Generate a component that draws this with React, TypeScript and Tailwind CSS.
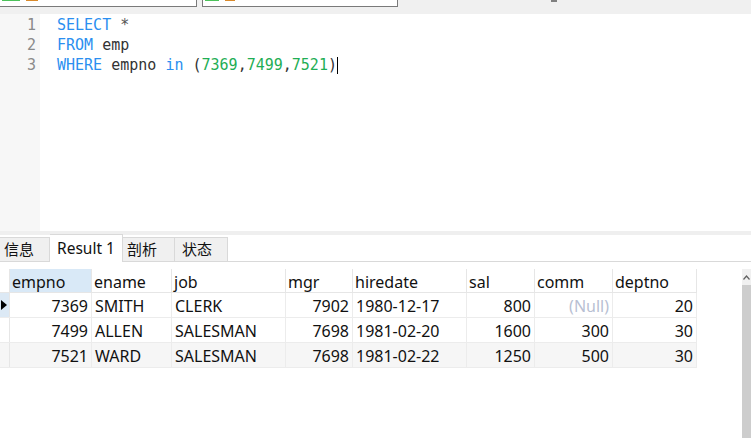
const cols = [
  { key: "empno", w: "w-[82px]", right: true },
  { key: "ename", w: "w-[80px]", right: false },
  { key: "job", w: "w-[114px]", right: false },
  { key: "mgr", w: "w-[67px]", right: true },
  { key: "hiredate", w: "w-[114px]", right: false },
  { key: "sal", w: "w-[68px]", right: true },
  { key: "comm", w: "w-[78px]", right: true },
  { key: "deptno", w: "w-[84px]", right: true },
];

const rows: (string | null)[][] = [
  ["7369", "SMITH", "CLERK", "7902", "1980-12-17", "800", null, "20"],
  ["7499", "ALLEN", "SALESMAN", "7698", "1981-02-20", "1600", "300", "30"],
  ["7521", "WARD", "SALESMAN", "7698", "1981-02-22", "1250", "500", "30"],
];

const mono = { fontFamily: '"DejaVu Sans Mono", "Liberation Mono", monospace' };
const ui = { fontFamily: '"Noto Sans", "Noto Sans CJK SC", sans-serif' };

const TopBar = () => (
  <div className="relative flex h-[14px] gap-[5px] overflow-hidden bg-[#f0f0f0]">
    <div className="-ml-px -mt-[14px] flex h-[21px] w-[198px] items-end gap-[6px] border border-[#7a7a7a] bg-white px-[2px]">
      <div className="mb-[5px] h-[6px] w-[18px] bg-[#4cc25a]" />
      <div className="mb-[5px] h-[2px] w-[12px] bg-[#d98a2b]" />
    </div>
    <div className="-mt-[14px] flex h-[21px] w-[196px] items-end gap-[6px] border border-[#7a7a7a] bg-white px-[2px]">
      <div className="mb-[5px] h-[6px] w-[14px] bg-[#4cc25a]" />
      <div className="mb-[5px] h-[2px] w-[10px] bg-[#d98a2b]" />
    </div>
    <div className="ml-[148px] h-[2px] w-[6px] bg-[#808080]" />
  </div>
);

const Editor = () => (
  <div className="flex h-[217px] bg-white" style={mono}>
    <div className="flex w-[40px] flex-col items-end bg-[#f7f7f7] pr-[4px] pt-[1px] text-[15px] leading-[20px] text-[#8a8a8a]">
      <div>1</div>
      <div>2</div>
      <div>3</div>
    </div>
    <div className="flex flex-col pl-[17px] pt-[1px] text-[15px] leading-[20px] text-[#333]">
      <div className="whitespace-pre">
        <span className="text-[#2b8ff0]">SELECT</span> <span className="text-[#555]">*</span>
      </div>
      <div className="whitespace-pre">
        <span className="text-[#2b8ff0]">FROM</span> emp
      </div>
      <div className="flex items-center whitespace-pre">
        <span className="text-[#2b8ff0]">WHERE</span> empno <span className="text-[#2b8ff0]">in</span> (
        <span className="text-[#1fae55]">7369</span>,<span className="text-[#1fae55]">7499</span>,
        <span className="text-[#1fae55]">7521</span>)
        <span className="h-[17px] w-px bg-black" />
      </div>
    </div>
  </div>
);

const Tabs = () => (
  <div className="flex h-[27px] items-end border-b border-[#d9d9d9] bg-white text-[15px] text-[#111]" style={ui}>
    <div className="-mb-px flex h-[25px] w-[50px] items-center border border-l-0 border-[#d9d9d9] bg-[#f0f0f0] pl-[4px]">信息</div>
    <div className="-mb-px flex h-[28px] w-[73px] items-center border border-b-0 border-l-0 border-[#d9d9d9] bg-white pl-[7px] text-[15.5px]">Result 1</div>
    <div className="-mb-px flex h-[25px] w-[52px] items-center border border-l-0 border-[#d9d9d9] bg-[#f0f0f0] pl-[4px]">剖析</div>
    <div className="-mb-px flex h-[25px] w-[53px] items-center border border-l-0 border-[#d9d9d9] bg-[#f0f0f0] pl-[7px]">状态</div>
  </div>
);

const Grid = () => (
  <div className="flex flex-1 bg-white pt-[7px]" style={ui}>
    <div className="flex flex-col text-[16px] text-[#111]">
      <div className="flex h-[24px] border-b border-[#e6e6e6]">
        <div className="w-[10px] border-r border-[#e6e6e6]" />
        {cols.map((c, i) => (
          <div
            key={c.key}
            className={`${c.w} flex items-center border-r border-[#e6e6e6] pl-[2px] pt-[2px] ${i === 0 ? "bg-[#d9e9f7]" : "bg-white"}`}
          >
            {c.key}
          </div>
        ))}
      </div>
      {rows.map((r, ri) => (
        <div
          key={ri}
          className={`flex h-[25px] border-b border-[#ececec] ${ri === 2 ? "bg-[#f6f6f6]" : "bg-white"}`}
        >
          <div
            className={`flex w-[10px] items-center border-r border-[#e6e6e6] ${ri === 0 ? "bg-[#dce9f5]" : ""}`}
          >
            {ri === 0 && (
              <svg width="6" height="10" viewBox="0 0 6 10" className="ml-[1px]">
                <path d="M0 0 L6 5 L0 10 Z" fill="#000" />
              </svg>
            )}
          </div>
          {cols.map((c, ci) => {
            const v = r[ci];
            return (
              <div
                key={c.key}
                className={`${c.w} flex items-center border-r border-[#ececec] px-[3px] pt-[1px] ${c.right ? "justify-end" : "justify-start"}`}
              >
                {v === null ? <span className="text-[#b8bfd3]">(Null)</span> : v}
              </div>
            );
          })}
        </div>
      ))}
    </div>
    <div className="ml-auto flex w-[9px] flex-col">
      <div className="flex h-[16px] items-center justify-center bg-[#f0f0f0]">
        <svg width="7" height="5" viewBox="0 0 7 5">
          <path d="M0.5 4.5 L3.5 1 L6.5 4.5" fill="none" stroke="#606060" strokeWidth="1.2" />
        </svg>
      </div>
      <div className="flex-1 bg-[#cdcdcd]" />
    </div>
  </div>
);

export default function App() {
  return (
    <div className="flex h-[438px] w-[751px] flex-col overflow-hidden bg-white">
      <TopBar />
      <Editor />
      <div className="h-[4px] bg-[#efefef]" />
      <Tabs />
      <Grid />
    </div>
  );
}
